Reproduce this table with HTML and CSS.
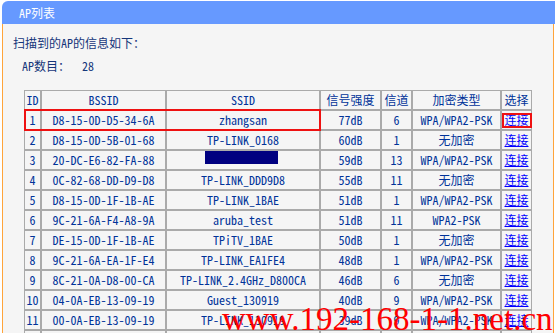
FILE: index.html
```html
<!DOCTYPE html>
<html lang="zh-CN">
<head>
<meta charset="utf-8">
<title>AP列表</title>
<link rel="stylesheet" href="styles.css">
</head>
<body>
<div class="frame">
  <div class="titlebar">AP列表</div>
  <div class="panel">
    <p class="intro">扫描到的AP的信息如下：</p>
    <p class="count">AP数目：<span class="num">28</span></p>
    <div class="tablewrap">
      <table class="aps">
        <thead>
          <tr>
            <th class="c-id">ID</th>
            <th class="c-bssid">BSSID</th>
            <th class="c-ssid">SSID</th>
            <th class="c-sig">信号强度</th>
            <th class="c-ch">信道</th>
            <th class="c-enc">加密类型</th>
            <th class="c-sel">选择</th>
          </tr>
        </thead>
        <tbody>
          <tr><td>1</td><td>D8-15-0D-D5-34-6A</td><td>zhangsan</td><td>77dB</td><td>6</td><td>WPA/WPA2-PSK</td><td><a href="#">连接</a></td></tr>
          <tr><td>2</td><td>D8-15-0D-5B-01-68</td><td>TP-LINK_0168</td><td>60dB</td><td>1</td><td>无加密</td><td><a href="#">连接</a></td></tr>
          <tr><td>3</td><td>20-DC-E6-82-FA-88</td><td><span class="redact"></span></td><td>59dB</td><td>13</td><td>WPA/WPA2-PSK</td><td><a href="#">连接</a></td></tr>
          <tr><td>4</td><td>0C-82-68-DD-D9-D8</td><td>TP-LINK_DDD9D8</td><td>55dB</td><td>11</td><td>无加密</td><td><a href="#">连接</a></td></tr>
          <tr><td>5</td><td>D8-15-0D-1F-1B-AE</td><td>TP-LINK_1BAE</td><td>51dB</td><td>1</td><td>WPA/WPA2-PSK</td><td><a href="#">连接</a></td></tr>
          <tr><td>6</td><td>9C-21-6A-F4-A8-9A</td><td>aruba_test</td><td>51dB</td><td>11</td><td>WPA2-PSK</td><td><a href="#">连接</a></td></tr>
          <tr><td>7</td><td>DE-15-0D-1F-1B-AE</td><td>TPiTV_1BAE</td><td>50dB</td><td>1</td><td>无加密</td><td><a href="#">连接</a></td></tr>
          <tr><td>8</td><td>9C-21-6A-EA-1F-E4</td><td>TP-LINK_EA1FE4</td><td>48dB</td><td>1</td><td>WPA/WPA2-PSK</td><td><a href="#">连接</a></td></tr>
          <tr><td>9</td><td>8C-21-0A-D8-00-CA</td><td>TP-LINK_2.4GHz_D800CA</td><td>46dB</td><td>6</td><td>无加密</td><td><a href="#">连接</a></td></tr>
          <tr><td>10</td><td>04-0A-EB-13-09-19</td><td>Guest_130919</td><td>40dB</td><td>9</td><td>WPA/WPA2-PSK</td><td><a href="#">连接</a></td></tr>
          <tr><td>11</td><td>00-0A-EB-13-09-19</td><td>TP-LINK_130919</td><td>39dB</td><td>9</td><td>WPA/WPA2-PSK</td><td><a href="#">连接</a></td></tr>
          <tr><td></td><td></td><td></td><td></td><td></td><td></td><td></td></tr>
        </tbody>
      </table>
      <div class="mark mark-row"></div>
      <div class="mark mark-link"></div>
    </div>
  </div>
  <div class="watermark">www.192-168-1-1.net.cn</div>
</div>
</body>
</html>
```
FILE: styles.css
```css
html, body {
  margin: 0;
  padding: 0;
  overflow: hidden;
  background: #ffffff;
}
body {
  font-family: "Noto Sans Mono CJK SC", "Noto Sans CJK SC", "DejaVu Sans Mono", monospace;
  font-size: 12px;
  color: #003399;
}
.frame {
  position: relative;
  margin: 1px 0 0 2px;
  width: 553px;
}
.titlebar {
  height: 23px;
  line-height: 23px;
  background: #6699ff;
  color: #ffffff;
  border-top-left-radius: 6px;
  padding-left: 17px;
}
.panel {
  box-sizing: border-box;
  width: 552px;
  height: 309px;
  overflow: hidden;
  border-left: 1px solid #ffa43a;
  border-right: 1px solid #ffa43a;
  background: #f5f5f5;
  padding: 9px 0 0 10px;
}
.intro {
  margin: 0;
  line-height: 20px;
  color: #15367a;
}
.count {
  margin: 3px 0 0 9px;
  line-height: 20px;
  color: #15367a;
}
.num {
  margin-left: 12px;
}
.tablewrap {
  position: relative;
  margin: 14px 0 0 11px;
  width: 508px;
}
.aps {
  table-layout: fixed;
  width: 508px;
  border-collapse: separate;
  border-spacing: 0;
}
.aps th,
.aps td {
  box-sizing: border-box;
  height: 20px;
  padding: 0;
  border: 1px solid #aaaaaa;
  text-align: center;
  vertical-align: middle;
  font-weight: normal;
  line-height: 18px;
  white-space: nowrap;
  overflow: hidden;
  color: #003399;
}
.c-id { width: 17px; }
.c-bssid { width: 125px; }
.c-ssid { width: 154px; }
.c-sig { width: 61px; }
.c-ch { width: 31px; }
.c-enc { width: 89px; }
.c-sel { width: 31px; }
.aps a {
  color: #0000ff;
  text-decoration: underline;
}
.redact {
  display: inline-block;
  width: 73px;
  height: 13px;
  background: #000080;
  vertical-align: top;
  margin-left: -3px;
}
.mark {
  position: absolute;
  box-sizing: border-box;
  border: 2px solid #ee1111;
}
.mark-row {
  left: 0;
  top: 19px;
  width: 297px;
  height: 22px;
}
.mark-link {
  left: 478px;
  top: 23px;
  width: 30px;
  height: 15px;
}
.watermark {
  position: absolute;
  left: 220px;
  top: 305px;
  font-family: "Liberation Serif", "Times New Roman", serif;
  font-size: 33px;
  line-height: 26px;
  color: #ff0000;
  white-space: nowrap;
}
```
